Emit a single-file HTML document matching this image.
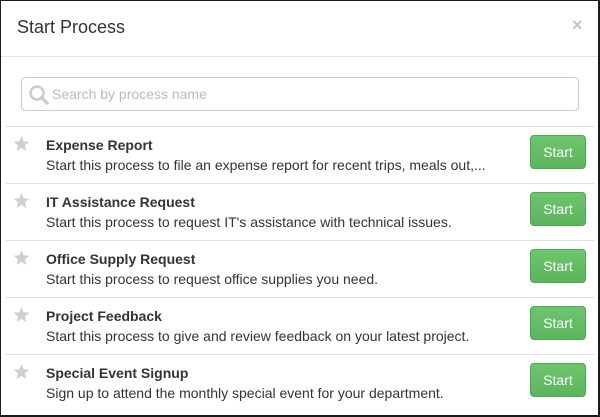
<!DOCTYPE html>
<html><head><style>
*{margin:0;padding:0;box-sizing:border-box}
body{width:600px;height:417px;background:#fff;font-family:"Liberation Sans",Arial,sans-serif;color:#333;overflow:hidden}
.frame{position:absolute;left:0;top:0;width:600px;height:417px;border:1px solid #1a1a1a;border-right-width:2px;border-bottom-width:2px}
.title{position:absolute;left:17px;top:17px;font-size:18px;color:#333}
.close{position:absolute;left:572px;top:15px;font-size:18px;font-weight:bold;color:#c4c4c4}
.hdr{position:absolute;left:1px;right:2px;top:56px;border-top:1px solid #e5e5e5}
.search{position:absolute;left:21px;top:77px;width:558px;height:34px;border:1px solid #ccc;border-radius:4px}
.search span{position:absolute;left:30px;top:8px;font-size:14px;color:#bbb}
.search svg{position:absolute;left:6px;top:6px}
.row{position:absolute;left:6px;width:588px;height:57px;border-top:1px solid #ddd}
.row .star{position:absolute;left:7px;top:9px}
.row b{position:absolute;left:40px;top:10px;font-size:14px;color:#333}
.row p{position:absolute;left:40px;top:30px;font-size:14px;color:#333;white-space:nowrap}
.row .btn{position:absolute;left:524px;top:8px;width:56px;height:34px;border-radius:4px;background:linear-gradient(#6dc56d,#5cb55c);border:1px solid #4fa84f;color:#fff;font-size:14px;text-align:center;line-height:32px}
</style></head><body>
<div class="frame"></div>
<div class="title">Start Process</div>
<div class="close">×</div>
<div class="hdr"></div>
<div class="search"><svg width="22" height="22" viewBox="0 0 22 22"><circle cx="9" cy="9" r="6.5" fill="none" stroke="#ccc" stroke-width="2.5"/><line x1="13.5" y1="13.5" x2="19" y2="19" stroke="#ccc" stroke-width="3.5" stroke-linecap="round"/></svg><span>Search by process name</span></div>
<div class="row" style="top:126px"><svg class="star" width="17" height="16" viewBox="0 0 24 23"><path d="M12 0l3.1 7.6 8.2.6-6.3 5.3 2 8-7-4.4-7 4.4 2-8L.7 8.2l8.2-.6z" fill="#cfcfcf"/></svg><b>Expense Report</b><p>Start this process to file an expense report for recent trips, meals out,...</p><div class="btn">Start</div></div>
<div class="row" style="top:183px"><svg class="star" width="17" height="16" viewBox="0 0 24 23"><path d="M12 0l3.1 7.6 8.2.6-6.3 5.3 2 8-7-4.4-7 4.4 2-8L.7 8.2l8.2-.6z" fill="#cfcfcf"/></svg><b>IT Assistance Request</b><p>Start this process to request IT's assistance with technical issues.</p><div class="btn">Start</div></div>
<div class="row" style="top:240px"><svg class="star" width="17" height="16" viewBox="0 0 24 23"><path d="M12 0l3.1 7.6 8.2.6-6.3 5.3 2 8-7-4.4-7 4.4 2-8L.7 8.2l8.2-.6z" fill="#cfcfcf"/></svg><b>Office Supply Request</b><p>Start this process to request office supplies you need.</p><div class="btn">Start</div></div>
<div class="row" style="top:297px"><svg class="star" width="17" height="16" viewBox="0 0 24 23"><path d="M12 0l3.1 7.6 8.2.6-6.3 5.3 2 8-7-4.4-7 4.4 2-8L.7 8.2l8.2-.6z" fill="#cfcfcf"/></svg><b>Project Feedback</b><p>Start this process to give and review feedback on your latest project.</p><div class="btn">Start</div></div>
<div class="row" style="top:354px"><svg class="star" width="17" height="16" viewBox="0 0 24 23"><path d="M12 0l3.1 7.6 8.2.6-6.3 5.3 2 8-7-4.4-7 4.4 2-8L.7 8.2l8.2-.6z" fill="#cfcfcf"/></svg><b>Special Event Signup</b><p>Sign up to attend the monthly special event for your department.</p><div class="btn">Start</div></div>
</body></html>
